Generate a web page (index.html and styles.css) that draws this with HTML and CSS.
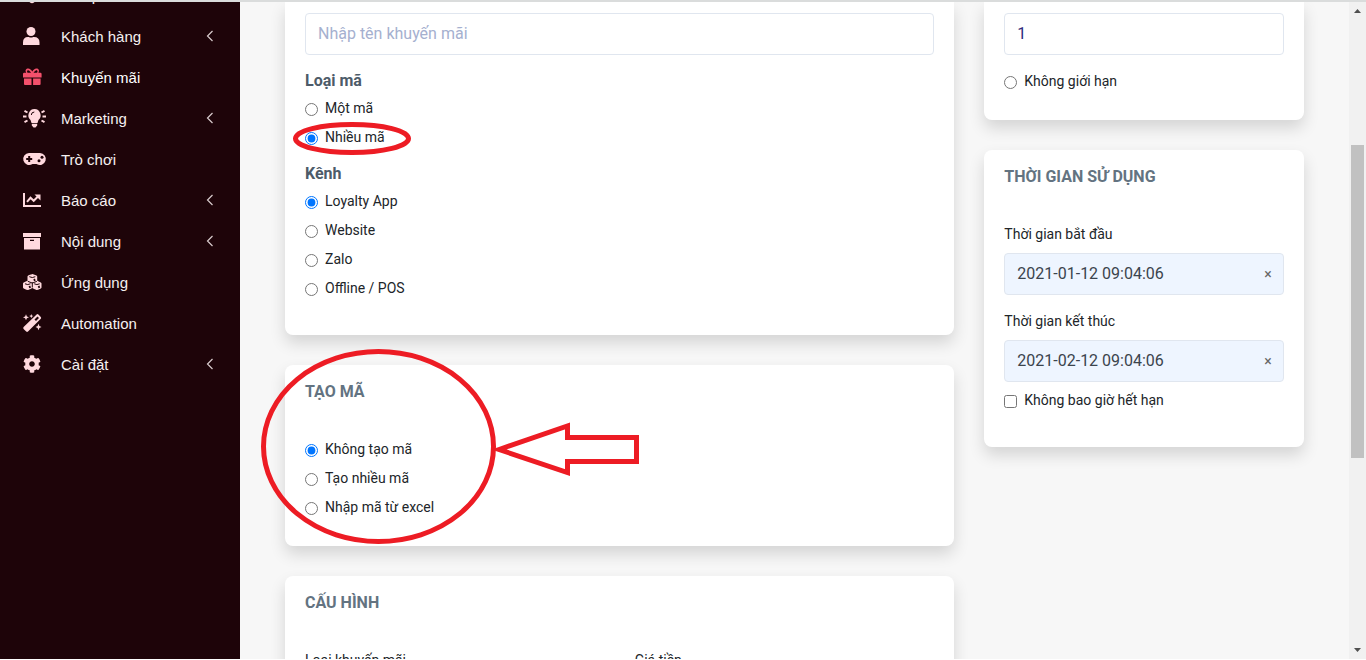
FILE: index.html
```html
<!DOCTYPE html>
<html lang="vi">
<head>
<meta charset="utf-8">
<title>Khuyến mãi</title>
<link rel="stylesheet" href="styles.css">
</head>
<body>
<svg class="defs" aria-hidden="true">
  <symbol id="chev" viewBox="0 0 8 12"><path d="M6.500 1L1.500 6l5 5" fill="none" stroke="currentColor" stroke-width="1.200"/></symbol>
</svg>
<div class="app">
  <nav class="sidebar">
    <div class="nav-cut"><a class="nav-item" href="#"><svg class="icon" viewBox="0 0 24 18"><path d="M3 2h12v10l-4 4.500q-2 1.500-4 0L3 12z"/></svg><span>Sản phẩm</span></a></div>
    <a class="nav-item" href="#"><svg class="icon" viewBox="0 0 24 18"><circle cx="8" cy="4.500" r="4.500"/><path d="M0 18v-2.500q0-5.500 5-5.500h.8q2.200 1 4.400 0h.8q5.500 0 5.500 5.500V18z"/></svg><span>Khách hàng</span><svg class="chev"><use href="#chev"/></svg></a>
    <a class="nav-item active" href="#"><svg class="icon" viewBox="0 0 24 18"><path fill-rule="evenodd" d="M0 6q0-1.200 1.200-1.200h2C1.800 2.500 3 .6 5.200.6 7 .6 8.200 2 9.300 3.600 10.400 2 11.600.6 13.400.6c2.200 0 3.400 1.900 2 4.200h2q1.200 0 1.200 1.200v3.500H0zM5.200 4.800h2.900C7 3 6 2.200 5.200 2.200 3.600 2.200 3.800 4.800 5.200 4.800zm5.300 0h2.900c1.400 0 1.600-2.600 0-2.600-.8 0-1.800.8-2.900 2.600zM1 10.400h7.500V17H2q-1 0-1-1zM10.100 10.400h7.500V16q0 1-1 1h-6.500z"/></svg><span>Khuyến mãi</span></a>
    <a class="nav-item" href="#"><svg class="icon" viewBox="0 0 24 18"><path d="M11.500 0a6.300 6.300 0 0 1 4 11L14.500 14h-6L7.500 11a6.300 6.300 0 0 1 4-11zM8.800 14.800h5.400V16.500L12.500 18.500h-2L8.800 16.500z"/><path class="ray" d="M0 7.500h3.500M1.500 1.800l3 1.700M1.500 13.200l3-1.700M23 7.500h-3.500M21.500 1.800l-3 1.700M21.500 13.200l-3-1.700"/><path class="cut-line" d="M8.300 6q0-2.800 3-3"/></svg><span>Marketing</span><svg class="chev"><use href="#chev"/></svg></a>
    <a class="nav-item" href="#"><svg class="icon" viewBox="0 0 24 18"><path d="M6 3h11a6 6 0 1 1-3.500 11h-4A6 6 0 1 1 6 3z"/><path class="cut-line pad" d="M6.200 6v6M3.200 9h6"/><circle class="cut" cx="16" cy="10.800" r="1.500"/><circle class="cut" cx="19" cy="7.200" r="1.500"/></svg><span>Trò chơi</span></a>
    <a class="nav-item" href="#"><svg class="icon" viewBox="0 0 24 18"><path d="M0 2h2v12h16v2H0z"/><path class="graph" d="M4 10.800l3.500-4 3.200 3L15 5.500"/><path d="M11.500 3.500h6v6z"/></svg><span>Báo cáo</span><svg class="chev"><use href="#chev"/></svg></a>
    <a class="nav-item" href="#"><svg class="icon" viewBox="0 0 24 18"><path fill-rule="evenodd" d="M0 1h18v4H0zM1 6h16V17.500H1zM7 7.800v1.200h4V7.800z"/></svg><span>Nội dung</span><svg class="chev"><use href="#chev"/></svg></a>
    <a class="nav-item" href="#"><svg class="icon" viewBox="0 0 24 18"><path d="M9.500 1q.6 0 4 1.500.7.300.7 1v4.300q.3.200 3.600 1.600.7.300.7 1v4q0 .7-.7 1-3.300 1.500-3.900 1.500t-4.600-2q-4 2-4.600 2T.7 15.400q-.7-.3-.7-1v-4q0-.7.700-1 3.300-1.400 3.800-1.600V3.500q0-.7.700-1Q8.900 1 9.500 1z"/><path class="cut-line" d="M6.300 3.700q3 1.700 6 0M9.300 9.200V14.500M4.800 8.300l4.500 1.800 4.600-1.800M2 10.800q2.800 1.500 5.500 0M11.200 10.800q2.700 1.500 5.500 0"/><path class="cut-line pad" d="M10.700 7.300l1.600-.8M6 14.300l1.600-.8M15.200 14.300l1.600-.8"/></svg><span>Ứng dụng</span></a>
    <a class="nav-item" href="#"><svg class="icon" viewBox="0 0 24 18"><path fill-rule="evenodd" d="M13.600.5q.9-.8 1.800 0L17.800 2.900q.8.900 0 1.800L5 17.500q-.9.800-1.800 0L.6 14.900q-.8-.9 0-1.800zM14.500 2.500l-3 3 1.500 1.500 3-3zM3 .3l.9 2.100 2.100.9-2.100.9L3 6.300l-.9-2.100L0 3.300l2.100-.9zM8.300 0l.6 1.500 1.500.6-1.500.6-.6 1.500-.6-1.500-1.500-.6 1.500-.6zM15.500 9.800l.9 2.300 2.100.9-2.100.9-.9 2.300-.9-2.300-2.100-.9 2.100-.9z"/></svg><span>Automation</span></a>
    <a class="nav-item" href="#"><svg class="icon" viewBox="0 0 683 512"><path d="M487.400 315.700l-42.600-24.600c4.300-23.200 4.300-47 0-70.200l42.600-24.600c4.900-2.800 7.100-8.600 5.500-14-11.100-35.600-30-67.800-54.700-94.600-3.800-4.100-10-5.100-14.800-2.300L380.800 110c-17.900-15.400-38.500-27.300-60.800-35.100V25.800c0-5.600-3.900-10.500-9.400-11.700-36.700-8.200-74.300-7.800-109.200 0-5.500 1.200-9.400 6.100-9.400 11.700V75c-22.200 7.900-42.800 19.800-60.800 35.100L88.700 85.500c-4.900-2.800-11-1.900-14.800 2.300-24.700 26.700-43.600 58.900-54.700 94.600-1.700 5.400.6 11.200 5.500 14L67.300 221c-4.300 23.200-4.300 47 0 70.200l-42.600 24.600c-4.900 2.800-7.100 8.600-5.500 14 11.100 35.600 30 67.800 54.700 94.600 3.800 4.100 10 5.100 14.800 2.300l42.600-24.600c17.900 15.400 38.500 27.300 60.800 35.100v49.200c0 5.600 3.900 10.500 9.400 11.700 36.700 8.200 74.300 7.800 109.200 0 5.500-1.200 9.400-6.100 9.400-11.700v-49.200c22.200-7.900 42.800-19.800 60.800-35.100l42.600 24.600c4.900 2.800 11 1.900 14.800-2.300 24.700-26.700 43.600-58.900 54.700-94.600 1.500-5.500-.7-11.300-5.600-14.100zM256 336c-44.100 0-80-35.900-80-80s35.900-80 80-80 80 35.900 80 80-35.900 80-80 80z"/></svg><span>Cài đặt</span><svg class="chev"><use href="#chev"/></svg></a>
  </nav>
  <main class="content">
    <div class="col">
      <section class="card card-first card-general">
        <input class="field" type="text" aria-label="Tên khuyến mãi" placeholder="Nhập tên khuyến mãi">
        <fieldset class="group">
          <legend>Loại mã</legend>
          <label class="choice"><input type="radio" name="type">Một mã</label>
          <label class="choice"><input type="radio" name="type" checked>Nhiều mã</label>
        </fieldset>
        <fieldset class="group group-next">
          <legend>Kênh</legend>
          <label class="choice"><input type="radio" name="channel" checked>Loyalty App</label>
          <label class="choice"><input type="radio" name="channel">Website</label>
          <label class="choice"><input type="radio" name="channel">Zalo</label>
          <label class="choice"><input type="radio" name="channel">Offline / POS</label>
        </fieldset>
      </section>
      <section class="card">
        <h2>TẠO MÃ</h2>
        <label class="choice"><input type="radio" name="create" checked>Không tạo mã</label>
        <label class="choice"><input type="radio" name="create">Tạo nhiều mã</label>
        <label class="choice"><input type="radio" name="create">Nhập mã từ excel</label>
      </section>
      <section class="card">
        <h2>CẤU HÌNH</h2>
        <div class="pair"><span class="caption">Loại khuyến mãi</span><span class="caption">Giá tiền</span></div>
      </section>
    </div>
    <div class="col">
      <section class="card card-first">
        <input class="field" type="text" aria-label="Số lần sử dụng" value="1">
        <label class="choice choice-limit"><input type="radio" name="limit">Không giới hạn</label>
      </section>
      <section class="card card-time">
        <h2>THỜI GIAN SỬ DỤNG</h2>
        <label class="caption" for="start">Thời gian bắt đầu</label>
        <div class="date"><input id="start" type="text" value="2021-01-12 09:04:06"><button type="button" aria-label="Xóa">×</button></div>
        <label class="caption" for="end">Thời gian kết thúc</label>
        <div class="date"><input id="end" type="text" value="2021-02-12 09:04:06"><button type="button" aria-label="Xóa">×</button></div>
        <label class="choice choice-never"><input type="checkbox">Không bao giờ hết hạn</label>
      </section>
    </div>
  </main>
  <div class="scrollbar" aria-hidden="true">
    <svg class="arrow" viewBox="0 0 17 17"><path d="M5 11h7L8.500 7z"/></svg>
    <div class="track"><div class="thumb"></div></div>
    <svg class="arrow" viewBox="0 0 17 17"><path d="M5 6h7l-3.500 4z"/></svg>
  </div>
</div>
<svg class="marks" viewBox="0 0 1366 660" aria-hidden="true">
  <ellipse cx="352" cy="138.500" rx="56.500" ry="14"/>
  <ellipse cx="378.500" cy="446.500" rx="115" ry="95"/>
  <path d="M499 449.500L567.500 426v11.500h69v24h-69v11z"/>
</svg>
</body>
</html>
```
FILE: styles.css
```css
* { box-sizing: border-box; }
body { margin: 0; background: #fff; font: 14px/21px Roboto, "Liberation Sans", sans-serif; color: #212529; }
.defs { display: none; }
.app { height: 100vh; display: flex; overflow: hidden; border-top: 2px solid #dadcdc; border-bottom: 1px solid #fff; background: #f7f7f7; }

.sidebar { width: 240px; flex: none; background: #1e0409; font: 15px/20px "Liberation Sans", Arial, sans-serif; }
.nav-cut { height: 14px; display: flex; align-items: flex-end; overflow: hidden; }
.nav-item { height: 41px; padding: 0 26px 0 23px; display: flex; align-items: center; flex: none; color: #f5f0f0; text-decoration: none; }
.icon { width: 24px; height: 18px; margin: 0 14px 2px 0; fill: #ffd9de; overflow: visible; }
.active { color: #fff; }
.active .icon { fill: #f4516c; }
.ray { fill: none; stroke: #ffd9de; stroke-width: 2; }
.graph { fill: none; stroke: #ffd9de; stroke-width: 2; }
.cut { fill: #1e0409; }
.cut-line { fill: none; stroke: #1e0409; stroke-width: 1; }
.pad { stroke-width: 2; }
.chev { width: 8px; height: 12px; margin: 0 0 2px auto; color: #d8cccd; }

.content { flex: 1; min-width: 0; padding: 0 30px; display: grid; grid-template-columns: 2fr 1fr; align-items: start; }
.col { min-width: 0; padding: 0 15px; display: flex; flex-direction: column; gap: 30px; }
.card { padding: 15px 20px 24px; border-radius: 8px; background: #fff; box-shadow: 0 8px 16px rgba(0, 0, 0, .14); }
.card-first { padding-top: 11px; border-radius: 0 0 8px 8px; }
.card-general { padding-bottom: 32px; }
.card-time { padding-bottom: 32px; }
h2 { margin: 0 0 31px; font-size: 16px; line-height: 24px; font-weight: 700; color: #637381; }
.field, .date { width: 100%; height: 42px; border: 1px solid #e0e6ef; border-radius: 4px; }
.field { display: block; padding: 0 12px 2px; background: #fff; font: 16px/24px Roboto, sans-serif; color: #2f2b7c; }
.field::placeholder { color: #a5b0cf; opacity: 1; }
.group { margin: 14px 0 0; padding: 0; border: 0; }
.group-next { margin-top: 10px; }
legend { padding: 0 0 1px; font-size: 16px; line-height: 24px; font-weight: 700; color: #4d5b69; }
.choice { height: 29px; display: flex; align-items: center; gap: 7px; }
.choice input { width: 13px; height: 13px; margin: 2px 0 0; accent-color: #0075ff; }
.choice-limit { margin-top: 12px; }
.choice-never { margin-top: 4px; }
.caption { display: block; padding-top: 4px; }
.pair { display: grid; grid-template-columns: 1fr 1fr; gap: 30px; }
.date { margin: 8px 0 12px; display: flex; align-items: center; background: #eef5ff; }
.date:last-of-type { margin-bottom: 0; }
.date input { flex: 1; min-width: 0; padding: 0 12px; border: 0; background: none; font: 16px/24px Roboto, sans-serif; color: #3b444d; }
.date button { width: 30px; padding: 0; border: 0; background: none; font: 14px/20px Roboto, sans-serif; color: #666; }

.scrollbar { width: 17px; flex: none; display: flex; flex-direction: column; background: #f1f1f1; }
.arrow { height: 17px; flex: none; fill: #505050; }
.track { flex: 1; padding: 0 2px; display: grid; grid-template-rows: 126fr 313fr 184fr; }
.thumb { grid-row: 2; background: #c1c1c1; }

.marks { position: absolute; left: 0; top: 0; width: 1366px; height: 660px; pointer-events: none; fill: none; stroke: #ed1c24; stroke-width: 5; }
```
